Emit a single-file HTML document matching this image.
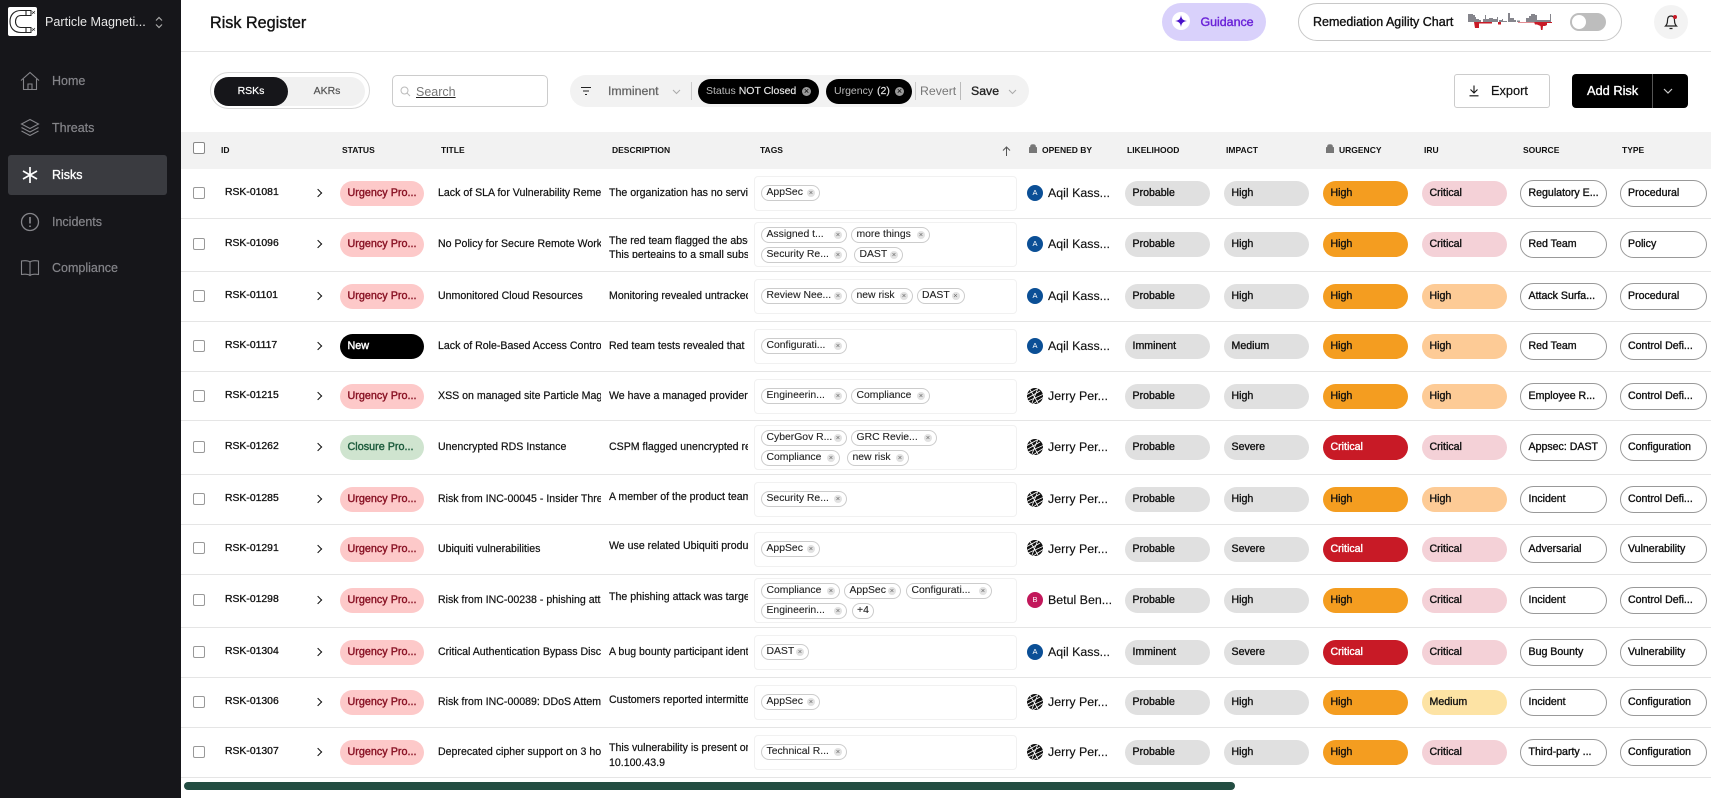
<!DOCTYPE html>
<html><head><meta charset="utf-8"><title>Risk Register</title>
<style>
*{box-sizing:border-box;margin:0;padding:0}
html,body{width:1711px;height:798px;overflow:hidden;background:#fff;font-family:"Liberation Sans",Arial,sans-serif;color:#111}
.a{position:absolute}
#side{position:absolute;left:0;top:0;width:181px;height:798px;background:#16161a;z-index:5}
.nav{position:absolute;left:52px;font-size:12.5px;color:#85858a;line-height:16px;-webkit-text-stroke:.2px #85858a}
.ico{position:absolute;left:20px;width:20px;height:20px;fill:none;stroke:#85858a;stroke-width:1.1}
.hd{position:absolute;top:145px;font-size:8.5px;font-weight:bold;line-height:10px;color:#111;white-space:nowrap}
.ln{position:absolute;left:181px;width:1530px;height:1px;background:#e5e5e5}
.r{position:absolute;left:0;width:1711px;height:0}
.cb{position:absolute;left:193px;top:-7px;width:12px;height:12px;border:1px solid #999;border-radius:2px;background:#fff}
.x{position:absolute;top:-7.5px;height:14px;line-height:14px;white-space:nowrap;overflow:hidden;font-size:10.6px;color:#111}
.id{left:225px;width:70px;font-size:10.4px;-webkit-text-stroke:.3px #111}
.ti{left:438px;width:163px;-webkit-text-stroke:.2px #111}
.de{left:609px;width:139px;-webkit-text-stroke:.2px #111}
.ch{position:absolute;left:315px;top:-3.5px;width:6px;height:6px;border-top:1.3px solid #111;border-right:1.3px solid #111;transform:rotate(45deg)}
.p{position:absolute;top:-12.5px;height:25px;border-radius:12.5px;line-height:24.5px;padding-left:7.5px;font-size:10.6px;white-space:nowrap;overflow:hidden;-webkit-text-stroke:.35px currentColor;color:#111}
.st{left:340px;width:84px;background:#fdc9c9;color:#8a1426;font-size:10.8px;-webkit-text-stroke:.4px currentColor}
.st.cl{background:#cfe4cf;color:#1c5b3c}
.st.nw{background:#000;color:#fff}
.li{left:1125px;width:85px;background:#e0e0e0}
.im{left:1224px;width:85px;background:#e0e0e0}
.ur{left:1323px;width:85px;background:#f49d20}
.ur.c{background:#c81a26;color:#fff}
.ir{left:1422px;width:85px;background:#f4d1d7}
.ir.h{background:#fdcb96}
.ir.m{background:#fde3a4}
.so,.ty{top:-13.5px;height:27px;border-radius:13.5px;background:#fff;border:1px solid #999;line-height:24.5px;padding-left:7.5px}
.so{left:1520px;width:87px}
.ty{left:1619.5px;width:87px}
.tb{position:absolute;left:753.5px;width:263px;top:-17.5px;height:35px;border:1px solid #f1f1f1;border-radius:4px;background:#fff}
.tb.h{top:-22.5px;height:45px}
.t{position:absolute;top:-8.5px;height:16px;border:1px solid #ccc;border-radius:8px;background:#fff;font-weight:normal;font-size:10.4px;line-height:14px;padding-left:4.5px;color:#222;white-space:nowrap;overflow:hidden;-webkit-text-stroke:.1px #222}
.t.u{top:-18px}
.t.d{top:2.5px}
.t i{position:absolute;right:4px;top:3px;width:8px;height:8px;border-radius:50%;background:#e2e2e2;-webkit-text-stroke:0}
.t i:before{content:"×";position:absolute;left:0;top:0;width:8px;text-align:center;font:normal 7.5px/8px "Liberation Sans",sans-serif;color:#666}
.av{position:absolute;left:1027px;top:-9px;width:16px;height:16px;border-radius:50%;color:#fff;font-size:7.5px;line-height:16px;text-align:center}
.av.a1{background:#0b4f96}
.av.b1{background:#c2185b}
.av svg{display:block}
.nm{position:absolute;left:1048px;top:-9.5px;line-height:18px;font-size:12.4px;color:#111;white-space:nowrap;-webkit-text-stroke:.15px #111}
</style></head><body>
<svg width="0" height="0" style="position:absolute"><defs>
<symbol id="jp" viewBox="0 0 16 16"><circle cx="8" cy="8" r="8" fill="#111"/><path d="M0 6.5L10 1M0 10.5L13 3M5 15L11 0M3 1.5L11 15M1 13L16 6.5M6 16L16 9.5" stroke="#fff" stroke-width=".8" fill="none"/></symbol>
</defs></svg>

<div id="side">
 <div class="a" style="left:8px;top:7px;width:29px;height:29px;background:#fff;border-radius:2px">
  <svg width="29" height="29" viewBox="0 0 29 29" fill="none" stroke="#222"><path d="M18 3.5H13C6 3.5 2 8 2 14.5S6 25.5 13 25.5H18V20.5H13C9.5 20.5 7.5 18 7.5 14.5S9.5 8.5 13 8.5H18Z" stroke-width="1.1"/><path d="M18 3.5H23V8.5H18M18 20.5H23V25.5H18" stroke-width="1"/><path d="M24 4.5L27 6.5M24 21.5L27 23.5M24 7L27 4M24 24L27 21" stroke-width=".6"/></svg>
 </div>
 <div class="a" style="left:45px;top:14px;font-size:12.6px;line-height:16px;color:#e8e8e8;white-space:nowrap">Particle Magneti...</div>
 <svg class="a" style="left:154px;top:16px" width="10" height="13" viewBox="0 0 10 13" fill="none" stroke="#aaa" stroke-width="1.2"><path d="M2 4.5L5 1.5L8 4.5M2 8.5L5 11.5L8 8.5"/></svg>

 <div class="a" style="left:8px;top:155px;width:159px;height:40px;background:#3a3b40;border-radius:3px"></div>

 <svg class="ico" style="top:71px" viewBox="0 0 20 20"><path d="M1 9.5L10 1.5L19 9.5M3.5 8V18.5H16.5V8M8 18.5V13H12V18.5"/></svg>
 <div class="nav" style="top:73px">Home</div>
 <svg class="ico" style="top:118px" viewBox="0 0 20 20"><path d="M10 1.5L18.500 6L10 10.5L1.500 6ZM1.500 9.5L10 14L18.500 9.5M1.500 13L10 17.5L18.500 13"/></svg>
 <div class="nav" style="top:120px">Threats</div>
 <svg class="ico" style="top:165px;stroke:#fff;stroke-width:1.7" viewBox="0 0 20 20"><path d="M10 2V18M3 6L17 14M17 6L3 14"/></svg>
 <div class="nav" style="top:167px;color:#fff;-webkit-text-stroke:.3px #fff">Risks</div>
 <svg class="ico" style="top:212px;stroke-width:1.3" viewBox="0 0 20 20"><circle cx="10" cy="10" r="8.5"/><path d="M10 5V11.5M10 13.5V15" stroke-width="1.7"/></svg>
 <div class="nav" style="top:214px">Incidents</div>
 <svg class="ico" style="top:258px" viewBox="0 0 20 20"><path d="M10 4C8 2.5 4.5 2.5 1.5 3V16.5C4.5 16 8 16 10 17.5C12 16 15.500 16 18.500 16.500V3C15.500 2.500 12 2.500 10 4ZM10 4V17.500"/></svg>
 <div class="nav" style="top:260px">Compliance</div>
</div>

<!-- top bar -->
<div class="a" style="left:210px;top:13px;font-size:16.2px;line-height:20px;-webkit-text-stroke:.35px #111;white-space:nowrap">Risk Register</div>
<div class="a" style="left:181px;top:51px;width:1530px;height:1px;background:#e4e4e4"></div>

<div class="a" style="left:1162px;top:3px;width:104px;height:38px;border-radius:19px;background:#d9d1fb"></div>
<div class="a" style="left:1172px;top:12px;width:18px;height:18px;border-radius:50%;background:#fff"></div>
<svg class="a" style="left:1175px;top:15px" width="12" height="12" viewBox="0 0 12 12"><path d="M6 0C6.5 4 8 5.5 12 6C8 6.5 6.5 8 6 12C5.5 8 4 6.5 0 6C4 5.5 5.5 4 6 0Z" fill="#4a12c9"/></svg>
<div class="a" style="left:1200.5px;top:13.5px;font-size:12.4px;line-height:16px;color:#6a22d8;-webkit-text-stroke:.4px #6a22d8;white-space:nowrap">Guidance</div>

<div class="a" style="left:1298px;top:3px;width:324px;height:38px;border-radius:19px;border:1px solid #c8c8c8;background:#fff"></div>
<div class="a" style="left:1313px;top:14px;font-size:12.5px;line-height:16px;-webkit-text-stroke:.35px #111;white-space:nowrap">Remediation Agility Chart</div>
<svg class="a" style="left:1468px;top:13px" width="86" height="18" viewBox="0 0 86 18">
 <path fill="#85858c" d="M0 9V1H5V2H7V4H8V9ZM8 9V6H11V7H13V9ZM15 9V6H17V2H18V6H21V5H25V6H29V4H30V9ZM31 9V7H34V6H35V8H39V9ZM40 9V0H42V5H46V7H48V9ZM49 9V7.5H52V9ZM58 9V5H61V3H63V1H67V2H69V9ZM69 9V7H82V1H83V9Z"/>
 <path fill="#c81a26" d="M6 9H11V15H7ZM11 9H24V10.500H11ZM30 9H33V11.500H30ZM66 9H84V10H79V12L77 13H75L74.500 17H73L72.500 13L69 11.500H67ZM50 9H66V9.500H50Z"/>
</svg>
<div class="a" style="left:1570px;top:13px;width:36px;height:18px;border-radius:9px;background:#bdbdbd"></div>
<div class="a" style="left:1572px;top:15px;width:14px;height:14px;border-radius:50%;background:#fff"></div>
<div class="a" style="left:1654px;top:5px;width:34px;height:34px;border-radius:50%;background:#f3f3f3"></div>
<svg class="a" style="left:1664px;top:14px" width="14" height="16" viewBox="0 0 14 16" fill="none" stroke="#222" stroke-width="1.2"><path d="M7 2C4.5 2 3.5 4 3.5 6.5C3.5 9 3 10.5 1.5 12H12.5C11 10.5 10.5 9 10.5 6.5C10.5 4 9.5 2 7 2ZM5.5 14.5H8.5"/></svg>
<div class="a" style="left:1672.5px;top:14.5px;width:4px;height:4px;border-radius:50%;background:#c81a26"></div>

<!-- toolbar -->
<div class="a" style="left:210px;top:72px;width:160px;height:37px;border-radius:18.5px;border:1px solid #d8d8d8;background:#fff"></div>
<div class="a" style="left:214px;top:77px;width:151px;height:29px;border-radius:14.5px;background:#f1f1f1"></div>
<div class="a" style="left:214px;top:77px;width:74px;height:29px;border-radius:14.5px;background:#16161a"></div>
<div class="a" style="left:214px;top:83px;width:74px;text-align:center;font-size:10.5px;line-height:17px;color:#fff;-webkit-text-stroke:.2px #fff">RSKs</div>
<div class="a" style="left:290px;top:83px;width:74px;text-align:center;font-size:10.5px;line-height:17px;color:#555;-webkit-text-stroke:.2px #555">AKRs</div>

<div class="a" style="left:392px;top:75px;width:156px;height:32px;border:1px solid #ccc;border-radius:5px;background:#fff"></div>
<svg class="a" style="left:400px;top:86px" width="11" height="11" viewBox="0 0 11 11" fill="none" stroke="#bbb" stroke-width="1"><circle cx="4.5" cy="4.5" r="3.5"/><path d="M7 7L10 10"/></svg>
<div class="a" style="left:416px;top:84px;font-size:12.5px;line-height:16px;color:#777;text-decoration:underline;text-decoration-color:#222;white-space:nowrap">Search</div>

<div class="a" style="left:570px;top:75px;width:459px;height:32px;border-radius:16px;background:#f2f2f2"></div>
<svg class="a" style="left:580px;top:86px" width="12" height="10" viewBox="0 0 12 10" fill="none" stroke="#222" stroke-width="1.1"><path d="M1 1.5H11M3 5H9M5 8.5H7"/></svg>
<div class="a" style="left:608px;top:83px;font-size:12.3px;line-height:16px;color:#666;-webkit-text-stroke:.3px #666;white-space:nowrap">Imminent</div>
<svg class="a" style="left:672px;top:89px" width="9" height="6" viewBox="0 0 9 6" fill="none" stroke="#aaa"><path d="M1 1L4.5 4.5L8 1"/></svg>
<div class="a" style="left:690.5px;top:82px;width:1px;height:18px;background:#ccc"></div>
<div class="a" style="left:698px;top:79px;width:121px;height:25px;border-radius:12.5px;background:#000"></div>
<div class="a" style="left:706px;top:82.5px;font-size:10.5px;line-height:16px;white-space:nowrap;color:#bbb">Status <span style="color:#e8e8e8;-webkit-text-stroke:.15px #e8e8e8">NOT Closed</span></div>
<div class="a" style="left:802px;top:86.5px;width:9px;height:9px;border-radius:50%;background:#999"></div>
<div class="a" style="left:802px;top:86.5px;width:9px;text-align:center;font-size:9px;line-height:9px;color:#000">×</div>
<div class="a" style="left:826px;top:79px;width:86px;height:25px;border-radius:12.5px;background:#000"></div>
<div class="a" style="left:834px;top:82.5px;font-size:10.5px;line-height:16px;white-space:nowrap;color:#bbb">Urgency <span style="color:#e8e8e8;-webkit-text-stroke:.15px #e8e8e8;margin-left:1px">(2)</span></div>
<div class="a" style="left:895px;top:86.5px;width:9px;height:9px;border-radius:50%;background:#999"></div>
<div class="a" style="left:895px;top:86.5px;width:9px;text-align:center;font-size:9px;line-height:9px;color:#000">×</div>
<div class="a" style="left:915px;top:82px;width:1px;height:18px;background:#ccc"></div>
<div class="a" style="left:920px;top:83px;font-size:12.3px;line-height:16px;color:#777;white-space:nowrap">Revert</div>
<div class="a" style="left:959.5px;top:82px;width:1px;height:18px;background:#bbb"></div>
<div class="a" style="left:971px;top:83px;font-size:12.3px;line-height:16px;color:#222;-webkit-text-stroke:.3px #222;white-space:nowrap">Save</div>
<svg class="a" style="left:1008px;top:89px" width="9" height="6" viewBox="0 0 9 6" fill="none" stroke="#aaa"><path d="M1 1L4.5 4.5L8 1"/></svg>

<div class="a" style="left:1454px;top:74px;width:96px;height:34px;border:1px solid #ccc;border-radius:3px;background:#fff"></div>
<svg class="a" style="left:1469px;top:85px" width="10" height="12" viewBox="0 0 10 12" fill="none" stroke="#111" stroke-width="1.1"><path d="M5 .5V7.5M1.5 4.5L5 8L8.5 4.5M.5 10.8H9.5"/></svg>
<div class="a" style="left:1491px;top:83px;font-size:12.8px;line-height:16px;-webkit-text-stroke:.2px #111;white-space:nowrap">Export</div>
<div class="a" style="left:1572px;top:74px;width:116px;height:34px;border-radius:4px;background:#000"></div>
<div class="a" style="left:1651.5px;top:74px;width:1px;height:34px;background:#555"></div>
<div class="a" style="left:1587px;top:83px;font-size:12.8px;line-height:16px;color:#fff;-webkit-text-stroke:.35px #fff;white-space:nowrap">Add Risk</div>
<svg class="a" style="left:1663px;top:88px" width="10" height="7" viewBox="0 0 10 7" fill="none" stroke="#ccc" stroke-width="1.2"><path d="M1 1L5 5L9 1"/></svg>

<!-- table head -->
<div class="a" style="left:181px;top:132px;width:1530px;height:37px;background:#f2f2f2"></div>
<div class="a" style="left:193px;top:142px;width:12px;height:12px;border:1px solid #888;border-radius:2px;background:#fff"></div>
<div class="hd" style="left:221px">ID</div>
<div class="hd" style="left:342px">STATUS</div>
<div class="hd" style="left:441px">TITLE</div>
<div class="hd" style="left:612px">DESCRIPTION</div>
<div class="hd" style="left:760px">TAGS</div>
<svg class="a" style="left:1002px;top:146px" width="9" height="10" viewBox="0 0 9 10" fill="none" stroke="#555" stroke-width="1"><path d="M4.5 10V1M1 4.5L4.5 1L8 4.5"/></svg>
<svg class="a" style="left:1029px;top:144px" width="8" height="9" viewBox="0 0 8 9"><path d="M0 3.5H8V9H0ZM1.5 3.5V2.5C1.5 0 6.5 0 6.5 2.5V3.5" fill="#777" stroke="#777" stroke-width=".7"/></svg>
<div class="hd" style="left:1042px">OPENED BY</div>
<div class="hd" style="left:1127px">LIKELIHOOD</div>
<div class="hd" style="left:1226px">IMPACT</div>
<svg class="a" style="left:1326px;top:144px" width="8" height="9" viewBox="0 0 8 9"><path d="M0 3.5H8V9H0ZM1.5 3.5V2.5C1.5 0 6.5 0 6.5 2.5V3.5" fill="#777" stroke="#777" stroke-width=".7"/></svg>
<div class="hd" style="left:1339px">URGENCY</div>
<div class="hd" style="left:1424px">IRU</div>
<div class="hd" style="left:1523px">SOURCE</div>
<div class="hd" style="left:1622px">TYPE</div>

<div class="ln" style="top:218px"></div><div class="ln" style="top:271px"></div><div class="ln" style="top:321px"></div><div class="ln" style="top:371px"></div><div class="ln" style="top:420px"></div><div class="ln" style="top:474px"></div><div class="ln" style="top:524px"></div><div class="ln" style="top:574px"></div><div class="ln" style="top:627px"></div><div class="ln" style="top:677px"></div><div class="ln" style="top:727px"></div><div class="ln" style="top:777px"></div>

<div class="r" style="top:193.5px"><i class="cb"></i><span class="x id">RSK-01081</span><i class="ch"></i><div class="p st">Urgency Pro...</div><span class="x ti">Lack of SLA for Vulnerability Remediation</span><span class="x de">The organization has no service</span><div class="tb"></div><b class="t" style="left:761px;width:59px">AppSec<i></i></b><div class="av a1">A</div><div class="nm">Aqil Kass...</div><div class="p li">Probable</div><div class="p im">High</div><div class="p ur">High</div><div class="p ir">Critical</div><div class="p so">Regulatory E...</div><div class="p ty">Procedural</div></div>

<div class="r" style="top:244.5px"><i class="cb"></i><span class="x id">RSK-01096</span><i class="ch"></i><div class="p st">Urgency Pro...</div><span class="x ti">No Policy for Secure Remote Work</span><span class="x de" style="top:-10.5px;height:24px">The red team flagged the absence<br>This perteains to a small subset</span><div class="tb h"></div><b class="t u" style="left:761px;width:86px">Assigned t...<i></i></b><b class="t u" style="left:851px;width:79px">more things<i></i></b><b class="t d" style="left:761px;width:86px">Security Re...<i></i></b><b class="t d" style="left:854px;width:49px">DAST<i></i></b><div class="av a1">A</div><div class="nm">Aqil Kass...</div><div class="p li">Probable</div><div class="p im">High</div><div class="p ur">High</div><div class="p ir">Critical</div><div class="p so">Red Team</div><div class="p ty">Policy</div></div>

<div class="r" style="top:296.5px"><i class="cb"></i><span class="x id">RSK-01101</span><i class="ch"></i><div class="p st">Urgency Pro...</div><span class="x ti">Unmonitored Cloud Resources</span><span class="x de">Monitoring revealed untracked</span><div class="tb"></div><b class="t" style="left:761px;width:86px">Review Nee...<i></i></b><b class="t" style="left:851px;width:62px">new risk<i></i></b><b class="t" style="left:916.5px;width:48px">DAST<i></i></b><div class="av a1">A</div><div class="nm">Aqil Kass...</div><div class="p li">Probable</div><div class="p im">High</div><div class="p ur">High</div><div class="p ir h">High</div><div class="p so">Attack Surfa...</div><div class="p ty">Procedural</div></div>

<div class="r" style="top:346.5px"><i class="cb"></i><span class="x id">RSK-01117</span><i class="ch"></i><div class="p st nw">New</div><span class="x ti">Lack of Role-Based Access Control</span><span class="x de">Red team tests revealed that</span><div class="tb"></div><b class="t" style="left:761px;width:86px">Configurati...<i></i></b><div class="av a1">A</div><div class="nm">Aqil Kass...</div><div class="p li">Imminent</div><div class="p im">Medium</div><div class="p ur">High</div><div class="p ir h">High</div><div class="p so">Red Team</div><div class="p ty">Control Defi...</div></div>

<div class="r" style="top:396.5px"><i class="cb"></i><span class="x id">RSK-01215</span><i class="ch"></i><div class="p st">Urgency Pro...</div><span class="x ti">XSS on managed site Particle Magnetics</span><span class="x de">We have a managed provider</span><div class="tb"></div><b class="t" style="left:761px;width:86px">Engineerin...<i></i></b><b class="t" style="left:851px;width:79px">Compliance<i></i></b><div class="av"><svg width="16" height="16"><use href="#jp"/></svg></div><div class="nm">Jerry Per...</div><div class="p li">Probable</div><div class="p im">High</div><div class="p ur">High</div><div class="p ir h">High</div><div class="p so">Employee R...</div><div class="p ty">Control Defi...</div></div>

<div class="r" style="top:447.5px"><i class="cb"></i><span class="x id">RSK-01262</span><i class="ch"></i><div class="p st cl">Closure Pro...</div><span class="x ti">Unencrypted RDS Instance</span><span class="x de">CSPM flagged unencrypted resources</span><div class="tb h"></div><b class="t u" style="left:761px;width:86px">CyberGov R...<i></i></b><b class="t u" style="left:851px;width:86px">GRC Revie...<i></i></b><b class="t d" style="left:761px;width:79px">Compliance<i></i></b><b class="t d" style="left:847px;width:62px">new risk<i></i></b><div class="av"><svg width="16" height="16"><use href="#jp"/></svg></div><div class="nm">Jerry Per...</div><div class="p li">Probable</div><div class="p im">Severe</div><div class="p ur c">Critical</div><div class="p ir">Critical</div><div class="p so">Appsec: DAST</div><div class="p ty">Configuration</div></div>

<div class="r" style="top:499.5px"><i class="cb"></i><span class="x id">RSK-01285</span><i class="ch"></i><div class="p st">Urgency Pro...</div><span class="x ti">Risk from INC-00045 - Insider Threat</span><span class="x de" style="top:-10px">A member of the product team</span><div class="tb"></div><b class="t" style="left:761px;width:86px">Security Re...<i></i></b><div class="av"><svg width="16" height="16"><use href="#jp"/></svg></div><div class="nm">Jerry Per...</div><div class="p li">Probable</div><div class="p im">High</div><div class="p ur">High</div><div class="p ir h">High</div><div class="p so">Incident</div><div class="p ty">Control Defi...</div></div>

<div class="r" style="top:549px"><i class="cb"></i><span class="x id">RSK-01291</span><i class="ch"></i><div class="p st">Urgency Pro...</div><span class="x ti">Ubiquiti vulnerabilities</span><span class="x de" style="top:-10px">We use related Ubiquiti products</span><div class="tb"></div><b class="t" style="left:761px;width:59px">AppSec<i></i></b><div class="av"><svg width="16" height="16"><use href="#jp"/></svg></div><div class="nm">Jerry Per...</div><div class="p li">Probable</div><div class="p im">Severe</div><div class="p ur c">Critical</div><div class="p ir">Critical</div><div class="p so">Adversarial</div><div class="p ty">Vulnerability</div></div>

<div class="r" style="top:600.5px"><i class="cb"></i><span class="x id">RSK-01298</span><i class="ch"></i><div class="p st">Urgency Pro...</div><span class="x ti">Risk from INC-00238 - phishing attack</span><span class="x de" style="top:-10.5px">The phishing attack was targeted</span><div class="tb h"></div><b class="t u" style="left:761px;width:79px">Compliance<i></i></b><b class="t u" style="left:844px;width:57px">AppSec<i></i></b><b class="t u" style="left:906px;width:86px">Configurati...<i></i></b><b class="t d" style="left:761px;width:86px">Engineerin...<i></i></b><b class="t d" style="left:851.5px;width:22px">+4</b><div class="av b1">B</div><div class="nm">Betul Ben...</div><div class="p li">Probable</div><div class="p im">High</div><div class="p ur">High</div><div class="p ir">Critical</div><div class="p so">Incident</div><div class="p ty">Control Defi...</div></div>

<div class="r" style="top:652.5px"><i class="cb"></i><span class="x id">RSK-01304</span><i class="ch"></i><div class="p st">Urgency Pro...</div><span class="x ti">Critical Authentication Bypass Discovered</span><span class="x de">A bug bounty participant identified</span><div class="tb"></div><b class="t" style="left:761px;width:48px">DAST<i></i></b><div class="av a1">A</div><div class="nm">Aqil Kass...</div><div class="p li">Imminent</div><div class="p im">Severe</div><div class="p ur c">Critical</div><div class="p ir">Critical</div><div class="p so">Bug Bounty</div><div class="p ty">Vulnerability</div></div>

<div class="r" style="top:702.5px"><i class="cb"></i><span class="x id">RSK-01306</span><i class="ch"></i><div class="p st">Urgency Pro...</div><span class="x ti">Risk from INC-00089: DDoS Attempt</span><span class="x de" style="top:-10px">Customers reported intermittent</span><div class="tb"></div><b class="t" style="left:761px;width:59px">AppSec<i></i></b><div class="av"><svg width="16" height="16"><use href="#jp"/></svg></div><div class="nm">Jerry Per...</div><div class="p li">Probable</div><div class="p im">High</div><div class="p ur">High</div><div class="p ir m">Medium</div><div class="p so">Incident</div><div class="p ty">Configuration</div></div>

<div class="r" style="top:752.5px"><i class="cb"></i><span class="x id">RSK-01307</span><i class="ch"></i><div class="p st">Urgency Pro...</div><span class="x ti">Deprecated cipher support on 3 hosts</span><span class="x de" style="top:-11.5px;height:26px;line-height:15px">This vulnerability is present on<br>10.100.43.9</span><div class="tb"></div><b class="t" style="left:761px;width:86px">Technical R...<i></i></b><div class="av"><svg width="16" height="16"><use href="#jp"/></svg></div><div class="nm">Jerry Per...</div><div class="p li">Probable</div><div class="p im">High</div><div class="p ur">High</div><div class="p ir">Critical</div><div class="p so">Third-party ...</div><div class="p ty">Configuration</div></div>

<div class="a" style="left:184px;top:782px;width:1051px;height:8px;border-radius:4px;background:#234d42"></div>
</body></html>
